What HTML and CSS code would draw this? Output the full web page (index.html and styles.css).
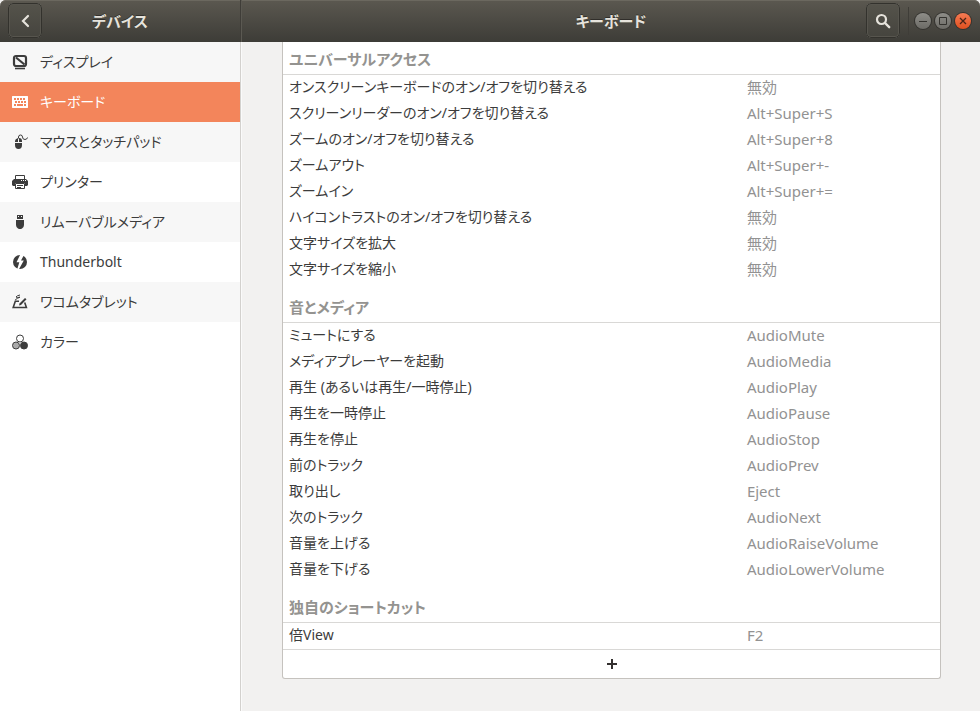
FILE: index.html
```html
<!DOCTYPE html>
<html lang="ja">
<head>
    <meta charset="UTF-8">
    <meta name="viewport" content="width=device-width, initial-scale=1.0">
    <title>キーボード</title>
    <link rel="stylesheet" href="styles.css">
</head>
<body>
    <header class="titlebar">
        <div class="titlebar-left">
            <button class="bar-button" aria-label="戻る">
                <svg width="16" height="16" viewBox="0 0 16 16"><path d="M11 3 6 8l5 5" fill="none" stroke="#e6e3dc" stroke-width="2.2" stroke-linecap="round"/></svg>
            </button>
            <h2 class="bar-title">デバイス</h2>
        </div>
        <div class="titlebar-right">
            <h1 class="bar-title">キーボード</h1>
            <button class="bar-button" aria-label="検索">
                <svg width="16" height="16" viewBox="0 0 16 16"><circle cx="6.5" cy="6.5" r="4.5" fill="none" stroke="#e6e3dc" stroke-width="2.2"/><path d="m10 10 4.2 4.2" stroke="#e6e3dc" stroke-width="2.4" stroke-linecap="round"/></svg>
            </button>
            <div class="window-buttons">
                <button class="window-button" aria-label="最小化">
                    <svg width="16" height="16" viewBox="0 0 16 16"><path d="M4 8.5h8" stroke="#33322e"/></svg>
                </button>
                <button class="window-button" aria-label="最大化">
                    <svg width="16" height="16" viewBox="0 0 16 16"><path d="M4.5 4.5h7v7h-7z" fill="none" stroke="#33322e"/></svg>
                </button>
                <button class="window-button close" aria-label="閉じる">
                    <svg width="16" height="16" viewBox="0 0 16 16"><path d="m5 5 6 6M11 5l-6 6" stroke="#4a2417" stroke-width="1.3"/></svg>
                </button>
            </div>
        </div>
    </header>
    <div class="content">
        <nav class="sidebar">
            <a class="item" href="#">
                <svg class="icon" viewBox="0 0 16 16"><rect x="2" y="2" width="12" height="10" rx="2" fill="none" stroke="currentColor" stroke-width="2.2"/><path d="m4 3.5 8.5 7" stroke="currentColor" stroke-width="2.2"/><path d="M3 14.5h10" stroke="currentColor" stroke-width="1.6"/></svg>
                ディスプレイ
            </a>
            <a class="item selected" href="#">
                <svg class="icon" viewBox="0 0 16 16"><path fill="currentColor" fill-rule="evenodd" d="M.5 2h15l.5.5v11l-.5.5H.5l-.5-.5v-11zM2 4v2h2V4zm3 0v2h2V4zm3 0v2h2V4zm3 0v2h2V4zM3 7v2h2V7zm3 0v2h2V7zm3 0v2h2V7zm3 0v2h2V7zM2 10v2h2v-2zm3 0v2h6v-2zm7 0v2h2v-2z"/></svg>
                キーボード
            </a>
            <a class="item" href="#">
                <svg class="icon" viewBox="0 0 16 16"><path fill="currentColor" d="M3 8V7q0-2 3-3v4zm4-4q3 0 3 3v1H7zM3 9h7v2q0 4-3.5 4T3 11z"/><path d="M6.5 4.5V3q0-2 2-2t2 2q0 2.500 2.5 2.5 2 0 2.5-2" fill="none" stroke="currentColor"/></svg>
                マウスとタッチパッド
            </a>
            <a class="item" href="#">
                <svg class="icon" viewBox="0 0 16 16"><path d="M3.5 5V1.5h9V5" fill="none" stroke="currentColor"/><path fill="currentColor" d="M2 5h12l2 2v4l-1 1h-2V9H3v3H1l-1-1V7z"/><path d="M3.5 9.5h9v5h-9z" fill="#fff" stroke="currentColor"/><path d="M5 11.5h6M5 13.5h4" stroke="currentColor"/><path d="M9 6.5h1m1 0h1m1 0h1" stroke="#fff"/></svg>
                プリンター
            </a>
            <a class="item" href="#">
                <svg class="icon" viewBox="0 0 16 16"><path fill="currentColor" fill-rule="evenodd" d="M5 1h6v4H5zm1 1v1h1V2zm3 0v1h1V2zM4 6h8v5q0 2-2 3.5l-1 .5H7l-1-.5Q4 13 4 11z"/></svg>
                リムーバブルメディア
            </a>
            <a class="item" href="#">
                <svg class="icon" viewBox="0 0 16 16"><circle cx="8" cy="8" r="7" fill="currentColor"/><path d="M8.500 0 4.5 8.200h2.800L5 16h1.500L11.800 6.500H9L12 1z" fill="#fff"/></svg>
                Thunderbolt
            </a>
            <a class="item" href="#">
                <svg class="icon" viewBox="0 0 16 16"><path d="M7 7.200H3.300L1.200 13.500h13.200l-1.700-5" fill="none" stroke="currentColor" stroke-width="1.6"/><path d="m7 11.500.5-2L13 4l1.500 1.300L9 11z" fill="currentColor"/><path d="M8 1Q5 1.500 4 3q1 1 4 .2-3 .8-5 3" fill="none" stroke="currentColor"/></svg>
                ワコムタブレット
            </a>
            <a class="item" href="#">
                <svg class="icon" viewBox="0 0 16 16"><g stroke="currentColor"><circle cx="8" cy="4.5" r="3.5" fill="#fff"/><circle cx="4" cy="11.5" r="3.5" fill="#aaa"/><circle cx="12" cy="11.5" r="3.5" fill="currentColor"/></g></svg>
                カラー
            </a>
        </nav>
        <main class="panel">
            <div class="list">
                <table class="shortcuts">
                    <colgroup>
                        <col class="col-action">
                        <col>
                    </colgroup>
                    <tbody>
                        <tr class="section"><th colspan="2">ユニバーサルアクセス</th></tr>
                        <tr><td>オンスクリーンキーボードのオン/オフを切り替える</td><td>無効</td></tr>
                        <tr><td>スクリーンリーダーのオン/オフを切り替える</td><td>Alt+Super+S</td></tr>
                        <tr><td>ズームのオン/オフを切り替える</td><td>Alt+Super+8</td></tr>
                        <tr><td>ズームアウト</td><td>Alt+Super+-</td></tr>
                        <tr><td>ズームイン</td><td>Alt+Super+=</td></tr>
                        <tr><td>ハイコントラストのオン/オフを切り替える</td><td>無効</td></tr>
                        <tr><td>文字サイズを拡大</td><td>無効</td></tr>
                        <tr><td>文字サイズを縮小</td><td>無効</td></tr>
                    </tbody>
                    <tbody>
                        <tr class="section"><th colspan="2">音とメディア</th></tr>
                        <tr><td>ミュートにする</td><td>AudioMute</td></tr>
                        <tr><td>メディアプレーヤーを起動</td><td>AudioMedia</td></tr>
                        <tr><td>再生 (あるいは再生/一時停止)</td><td>AudioPlay</td></tr>
                        <tr><td>再生を一時停止</td><td>AudioPause</td></tr>
                        <tr><td>再生を停止</td><td>AudioStop</td></tr>
                        <tr><td>前のトラック</td><td>AudioPrev</td></tr>
                        <tr><td>取り出し</td><td>Eject</td></tr>
                        <tr><td>次のトラック</td><td>AudioNext</td></tr>
                        <tr><td>音量を上げる</td><td>AudioRaiseVolume</td></tr>
                        <tr><td>音量を下げる</td><td>AudioLowerVolume</td></tr>
                    </tbody>
                    <tbody>
                        <tr class="section"><th colspan="2">独自のショートカット</th></tr>
                        <tr><td>倍View</td><td>F2</td></tr>
                    </tbody>
                </table>
                <button class="add-button" aria-label="ショートカットを追加">
                    <svg width="10" height="10" viewBox="0 0 10 10"><path d="M5 0v10M0 5h10" stroke="#33302f" stroke-width="2"/></svg>
                </button>
            </div>
        </main>
    </div>
</body>
</html>
```
FILE: styles.css
```css
* {
    box-sizing: border-box;
}
body {
    margin: 0;
    height: 100vh;
    display: flex;
    flex-direction: column;
    overflow: hidden;
    background-color: #f2f1f0;
    color: #3c3c3c;
    font-family: "Noto Sans", "Noto Sans CJK JP", sans-serif;
    font-size: 14px;
    font-feature-settings: "palt";
    line-height: 20px;
}
button {
    margin: 0;
    padding: 0;
    cursor: pointer;
}
.titlebar {
    display: flex;
    flex: none;
    height: 42px;
    border-radius: 6px 6px 0 0;
    background-image: linear-gradient(#5b5850, #3d3c37);
    box-shadow: inset 0 1px #6b685f;
    color: #e6e3dc;
}
.titlebar-left,
.titlebar-right {
    display: flex;
    align-items: center;
    padding-bottom: 1px;
}
.titlebar-left {
    width: 241px;
    padding-left: 8px;
    padding-right: 42px;
    border-right: 1px solid #3f3d38;
}
.titlebar-right {
    flex: 1;
    padding-right: 9px;
    border-left: 1px solid #5b5952;
}
.titlebar-right .bar-title {
    padding-left: 114px;
}
.bar-title {
    flex: 1;
    margin: 0;
    font-size: 15px;
    font-weight: 600;
    text-align: center;
    text-shadow: 0 -1px rgba(0, 0, 0, 0.4);
}
.bar-button {
    display: flex;
    align-items: center;
    justify-content: center;
    width: 34px;
    height: 35px;
    border: 1px solid #33322d;
    border-radius: 5px;
    background-image: linear-gradient(#55534b, #45443e);
    box-shadow: inset 0 0 0 1px #57554e;
}
.window-buttons {
    display: flex;
    gap: 4px;
    margin-left: 8px;
    padding: 6px 0 6px 6px;
    border-left: 1px solid #3f3d38;
}
.window-button {
    display: flex;
    width: 16px;
    height: 16px;
    border: none;
    border-radius: 50%;
    background-image: linear-gradient(#8e8d88, #6c6b66);
    box-shadow: 0 0 0 1px #34332f;
}
.window-button.close {
    background-image: linear-gradient(#f57b54, #e0501f);
}
.content {
    display: flex;
    flex: 1;
    min-height: 0;
}
.sidebar {
    width: 241px;
    border-right: 1px solid #d3d1ce;
    background-color: #fff;
}
.item {
    display: flex;
    align-items: center;
    gap: 12px;
    height: 40px;
    padding: 0 12px;
    color: #3c3c3c;
    text-decoration: none;
}
.item:nth-child(odd) {
    background-color: #f7f7f7;
}
.item.selected {
    background-color: #f3855b;
    color: #fff;
}
.icon {
    width: 16px;
    height: 16px;
}
.panel {
    flex: 1;
    padding: 0 39px 32px 40px;
    border-left: 1px solid #fafafa;
    overflow: hidden;
}
.list {
    border: 1px solid #c5c2be;
    border-top: none;
    border-radius: 0 0 3px 3px;
    background-color: #fff;
}
.shortcuts {
    width: 100%;
    border-collapse: separate;
    border-spacing: 0;
    table-layout: fixed;
}
.col-action {
    width: 70%;
}
.shortcuts td {
    height: 26px;
    padding: 2px 4px 4px;
    color: #929292;
    font-size: 15px;
}
.shortcuts td:first-child {
    padding-left: 6px;
    color: #3c3c3c;
    font-size: 14px;
}
.shortcuts th {
    height: 40px;
    padding: 12px 6px 4px;
    border-bottom: 1px solid #d9d8d6;
    color: #949390;
    font-size: 15px;
    font-weight: 600;
    text-align: left;
}
.shortcuts tbody:first-of-type th {
    height: 33px;
    padding-top: 5px;
}
.add-button {
    display: flex;
    align-items: center;
    justify-content: center;
    width: 100%;
    height: 29px;
    border: none;
    border-top: 1px solid #d9d8d6;
    background-color: transparent;
}
```
